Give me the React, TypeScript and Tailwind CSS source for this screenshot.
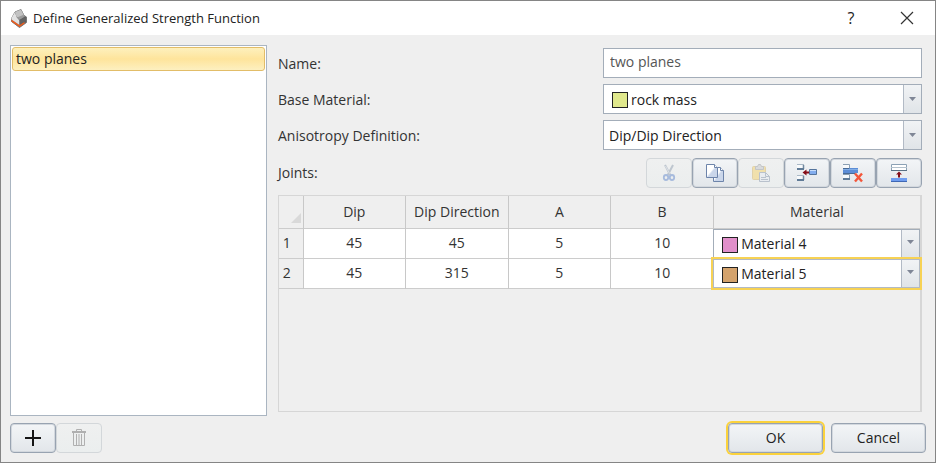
import React, { useState } from 'react';
import clsx from 'clsx';

interface Joint {
    id: number;
    dip: number;
    dipDirection: number;
    a: number;
    b: number;
    material: string;
}

const COLORS: { [key: string]: string } = {
    'rock mass': '#e0e88c',
    'Material 4': '#e18fca',
    'Material 5': '#d3a26c',
};

const JOINTS: Joint[] = [
    { id: 1, dip: 45, dipDirection: 45, a: 5, b: 10, material: 'Material 4' },
    { id: 2, dip: 45, dipDirection: 315, a: 5, b: 10, material: 'Material 5' },
];

const MATERIALS = Object.keys(COLORS);

type ButtonProps = React.ButtonHTMLAttributes<HTMLButtonElement>;

const PushButton = ({ className, ...props }: ButtonProps) => (
    <button
        type="button"
        className={clsx(
            'flex h-[30px] items-center justify-center rounded-[4px] border border-[#98a3b1] bg-linear-to-b from-[#f3f5f7] to-[#e2e6ea] inset-ring inset-ring-[#d3d8de]',
            'disabled:border-[#d3d7da] disabled:from-[#eff0f0] disabled:to-[#ebeeee] disabled:inset-ring-0',
            className
        )}
        {...props}
    />
);

type SelectProps = {
    id?: string;
    label?: string;
    value: string;
    options: string[];
    swatch?: boolean;
    inTable?: boolean;
    focused?: boolean;
    onChange: (value: string) => void;
}

const Select = ({ id, label, value, options, swatch, inTable, focused, onChange }: SelectProps) => (
    <div
        className={clsx(
            'relative border bg-white',
            inTable ? 'h-[29px]' : 'h-[30px]',
            focused ? 'border-[#b2bac5] outline-2 outline-[#f7d254]' : 'border-[#a3adb9]'
        )}
    >
        <select
            id={id}
            aria-label={label}
            value={value}
            onChange={(e) => onChange(e.target.value)}
            className={clsx('block h-full w-full appearance-none pt-px pr-5 text-[#222] outline-none', swatch ? 'pl-[27px]' : 'pl-[5px]')}
        >
            {options.map((option) => (
                <option key={option} value={option}>{option}</option>
            ))}
        </select>
        {swatch && (
            <span
                className="pointer-events-none absolute top-[7px] left-2 size-4 border border-[#222]"
                style={{ backgroundColor: COLORS[value] }}
            />
        )}
        <span className="pointer-events-none absolute inset-y-0 right-0 flex w-[18px] items-center justify-center border-l border-[#b2bac5] bg-linear-to-b from-[#f1f3f5] to-[#e0e4e8]">
            <svg width="7" height="4" viewBox="0 0 7 4" className={inTable ? 'mb-[2px]' : 'mb-0'}>
                <path d="M0 0h7L3.5 4z" fill="#7f8696" />
            </svg>
        </span>
    </div>
);

const AppIcon = () => (
    <svg width="18" height="19" viewBox="0 0 18 19">
        <path d="M1.500 9.500 5 3l6-2.500 3 6L16.500 8v5.500l-7 5-8-6z" fill="#5f5f5f" stroke="#777" />
        <path d="m1.500 10.500 8 5.500 5-3.500v2l-5 3.500-8-5.500z" fill="#f25c1c" />
        <path d="M1.500 9 5 3l1.500 5 3 3.500V16l-8-5.500z" fill="#e2e2e2" />
        <path d="m5 3 6-2.500 3 6L8.500 9l-2-1z" fill="#c2c2c2" />
        <path d="m7 8.500 6-2.500 2 1.500L9.500 11z" fill="#9a9a9a" />
        <path d="M9.500 11 16 7.500V12l-6.500 4z" fill="#626262" />
    </svg>
);

const CutIcon = () => (
    <svg width="14" height="18" viewBox="0 0 14 18" fill="none" opacity=".55">
        <path d="m3 1 5.500 10.500M11 1 5.500 11.500" stroke="#98a5b5" strokeWidth="2" />
        <path d="m3.500 2 4 7.500" stroke="#dfe5ec" strokeWidth=".8" />
        <ellipse cx="4" cy="13.500" rx="2.200" ry="2.500" stroke="#6f91cf" strokeWidth="1.800" />
        <ellipse cx="10" cy="13.500" rx="2.200" ry="2.500" stroke="#6f91cf" strokeWidth="1.800" />
    </svg>
);

const CopyIcon = () => (
    <svg width="20" height="20" viewBox="0 0 20 20" stroke="#6d84aa">
        <defs>
            <linearGradient id="sheet" x1="0" y1="0" x2="1" y2="1">
                <stop offset=".45" stopColor="#fff" />
                <stop offset=".55" stopColor="#cad6ea" />
            </linearGradient>
        </defs>
        <path d="M8.500 4.500h7l3 3v11h-10z" fill="url(#sheet)" />
        <path d="M15.500 4.500v3h3" fill="#fff" />
        <path d="M1.500 1.500h8l3 3v10h-11z" fill="url(#sheet)" />
        <path d="M9.500 1.500v3h3" fill="#fff" />
    </svg>
);

const PasteIcon = () => (
    <svg width="20" height="18" viewBox="0 0 20 18" opacity=".5">
        <rect x="1.500" y="2.500" width="13" height="13" rx="1" fill="#f4d26b" stroke="#d5b566" />
        <path d="M4.500 5.500v-3h2l1-2h2l1 2h2v3z" fill="#c5c7ca" stroke="#989ca3" />
        <path d="M8.500 8.500h6l4 4v5h-10z" fill="#e6ebf2" stroke="#8796ac" />
        <path d="M14.500 8.500v4h4M10 13.500h5M10 15.500h7" fill="none" stroke="#8796ac" />
    </svg>
);

const InsertIcon = () => (
    <svg width="20" height="18" viewBox="0 0 20 18">
        <path d="M0 .5h7v5H0zM0 11.500h7v5H0z" fill="#f8fafc" />
        <path d="M0 .5h7M0 11.500h7" stroke="#a9b8c6" />
        <path d="M6.500 1v4M6.500 12v4" stroke="#7189a0" strokeWidth="1.500" />
        <path d="M0 5h7M0 16h7" stroke="#607b97" strokeWidth="2" />
        <path d="m5.500 8.500 4-3v2H12v2H9.500v2z" fill="#850d18" />
        <path d="M12.500 5.500h7v5h-7z" fill="#83adee" stroke="#54749d" />
        <path d="M13 6.500h6" stroke="#c6dcfa" />
    </svg>
);

const DeleteIcon = () => (
    <svg width="20" height="20" viewBox="0 0 20 20">
        <path d="M0 1.500h6v4H0zM0 11.500h6v4H0z" fill="#f8fafc" />
        <path d="M0 1.500h6.500v4M0 11.500h6.500v4" fill="none" stroke="#8a9fb3" />
        <path d="M0 16h7" stroke="#607b97" strokeWidth="2" />
        <path d="M0 5h15v5H0z" fill="#5c8dd6" />
        <path d="M0 6.500h15" stroke="#83aee6" />
        <path d="M0 10.500h12M0 5.500h6" stroke="#496a94" />
        <path d="m12 10.500 7 8M19 10.500l-7 8" stroke="#f3563a" strokeWidth="2.400" />
    </svg>
);

const AppendIcon = () => (
    <svg width="18" height="20" viewBox="0 0 18 20">
        <path d="M1.500 1.500h15v6h-15z" fill="#fff" stroke="#8ba1b5" />
        <path d="M1 4.500h16" stroke="#b3c1cc" />
        <path d="M1 7.500h16" stroke="#587084" />
        <path d="m9 8.500 3 3h-2v3H8v-3H6z" fill="#850d18" />
        <path d="M1 15h16v4H1z" fill="#6f9df0" />
        <path d="M1 18.500h16" stroke="#3f68b5" />
    </svg>
);

const PlusIcon = () => (
    <svg width="18" height="18" viewBox="0 0 18 18">
        <path d="M9 1v16M1 9h16" stroke="#151515" strokeWidth="2" />
    </svg>
);

const TrashIcon = () => (
    <svg width="16" height="18" viewBox="0 0 16 18" fill="none" stroke="#b0b0b0">
        <path d="M1 3h14" strokeWidth="2" />
        <path d="M5.500 2V.5h5V2M2.500 4v12.500h11V4M5.500 5v11M8 5v11M10.500 5v11" />
    </svg>
);

const TOOLS = [
    { name: 'Cut', icon: <CutIcon />, disabled: true },
    { name: 'Copy', icon: <CopyIcon /> },
    { name: 'Paste', icon: <PasteIcon />, disabled: true },
    { name: 'Insert row', icon: <InsertIcon /> },
    { name: 'Delete row', icon: <DeleteIcon /> },
    { name: 'Append row', icon: <AppendIcon /> },
];

export default function App() {
    const [name, setName] = useState('two planes');
    const [baseMaterial, setBaseMaterial] = useState('rock mass');
    const [definition, setDefinition] = useState('Dip/Dip Direction');
    const [joints, setJoints] = useState<Joint[]>(JOINTS);

    const setMaterial = (id: number, material: string) => {
        setJoints(joints.map((joint) => (joint.id === id ? { ...joint, material } : joint)));
    };

    return (
        <div className="flex min-h-screen flex-col border border-[#858585] bg-[#efefef] font-['Open_Sans','Noto_Sans',sans-serif] text-sm text-[#333]">
            <header className="flex h-[34px] items-center bg-white pl-[9px] text-[#222]">
                <AppIcon />
                <h1 className="ml-[5px] flex-1 text-[13px]">Define Generalized Strength Function</h1>
                <button type="button" aria-label="Help" className="w-14 text-base">?</button>
                <button type="button" aria-label="Close" className="flex w-14 justify-center">
                    <svg width="14" height="14" viewBox="0 0 14 14">
                        <path d="m1 1 12 12M13 1 1 13" stroke="#333" strokeWidth="1.200" />
                    </svg>
                </button>
            </header>

            <main className="flex flex-1 gap-[11px] pt-[10px] pr-[13px] pl-[9px]">
                <ul className="w-[257px] shrink-0 border border-[#aab5c1] bg-white p-px">
                    <li>
                        <button
                            type="button"
                            className="block h-6 w-full rounded-[3px] border border-[#e2bd68] bg-linear-to-b from-[#fdf0bd] via-[#fee49b] to-[#fdf0c0] px-[3px] text-left text-[#222]"
                        >
                            {name}
                        </button>
                    </li>
                </ul>

                <div className="flex min-w-0 flex-1 flex-col pt-[3px] pb-1">
                    <div className="grid grid-cols-[1fr_319px] items-center gap-y-[6px]">
                        <label htmlFor="name" className="pt-px">Name:</label>
                        <input
                            id="name"
                            value={name}
                            onChange={(e) => setName(e.target.value)}
                            className="h-[30px] border border-[#a3adb9] bg-white px-[6px] pb-[3px] text-[#555] outline-none"
                        />
                        <label htmlFor="base" className="pt-px">Base Material:</label>
                        <Select id="base" value={baseMaterial} options={MATERIALS} swatch onChange={setBaseMaterial} />
                        <label htmlFor="definition" className="pt-px">Anisotropy Definition:</label>
                        <Select
                            id="definition"
                            value={definition}
                            options={['Dip/Dip Direction', 'Surface']}
                            onChange={setDefinition}
                        />
                    </div>

                    <div className="mt-2 flex items-center justify-between">
                        <span>Joints:</span>
                        <div className="flex">
                            {TOOLS.map((tool) => (
                                <PushButton key={tool.name} aria-label={tool.name} disabled={tool.disabled} className="w-[46px]">
                                    {tool.icon}
                                </PushButton>
                            ))}
                        </div>
                    </div>

                    <div className="mt-[7px] flex-1 border border-r-2 border-[#d6d6d6]">
                        <table className="w-full table-fixed border-collapse text-center">
                            <colgroup>
                                <col className="w-6" />
                                <col className="w-[16%]" />
                                <col className="w-[16%]" />
                                <col className="w-[16%]" />
                                <col className="w-[16%]" />
                                <col />
                            </colgroup>
                            <thead>
                                <tr className="h-8 border-b border-[#ccc]">
                                    <th className="pt-3 pl-3" aria-label="Row">
                                        <svg width="10" height="10" viewBox="0 0 10 10">
                                            <path d="M10 0v10H0z" fill="#d9d9d9" />
                                        </svg>
                                    </th>
                                    {['Dip', 'Dip Direction', 'A', 'B', 'Material'].map((title) => (
                                        <th key={title} className="border-l border-[#c8c8c8] font-normal">{title}</th>
                                    ))}
                                </tr>
                            </thead>
                            <tbody>
                                {joints.map((joint) => (
                                    <tr key={joint.id} className="border-b border-[#ccc]">
                                        <th className="pr-2 font-normal">{joint.id}</th>
                                        {[joint.dip, joint.dipDirection, joint.a, joint.b].map((value, i) => (
                                            <td key={i} className="border-l border-[#c8c8c8] bg-white">{value}</td>
                                        ))}
                                        <td className="p-0 text-left">
                                            <Select
                                                label={`Material of joint ${joint.id}`}
                                                value={joint.material}
                                                options={MATERIALS}
                                                swatch
                                                inTable
                                                focused={joint.id === 2}
                                                onChange={(material) => setMaterial(joint.id, material)}
                                            />
                                        </td>
                                    </tr>
                                ))}
                            </tbody>
                        </table>
                    </div>
                </div>
            </main>

            <footer className="flex items-center pt-[7px] pr-[9px] pb-[9px] pl-[9px]">
                <PushButton aria-label="Add function" className="w-[46px]"><PlusIcon /></PushButton>
                <PushButton aria-label="Delete function" disabled className="w-[46px]"><TrashIcon /></PushButton>
                <PushButton className="mr-2 ml-auto w-[95px] text-[#222] ring-2 ring-[#fbd23c]">OK</PushButton>
                <PushButton className="w-[95px] text-[#222]">Cancel</PushButton>
            </footer>
        </div>
    );
}
